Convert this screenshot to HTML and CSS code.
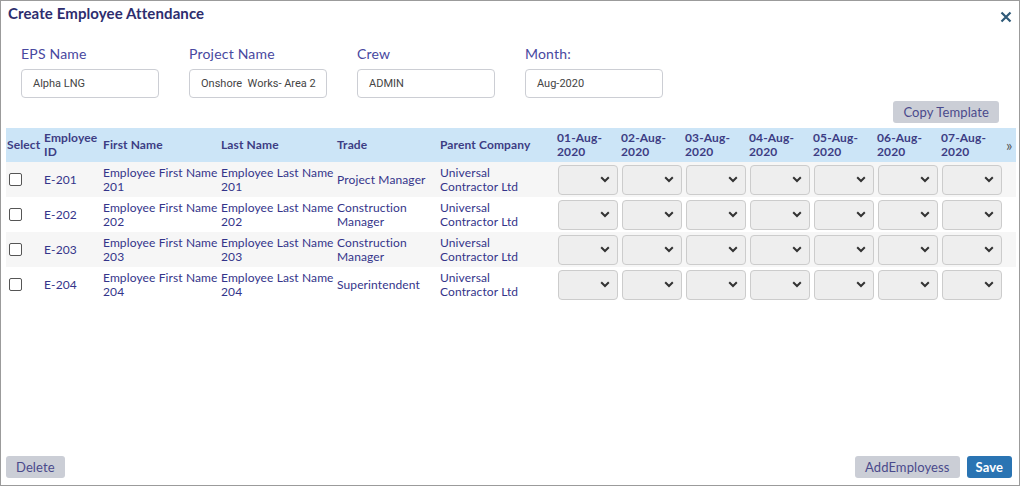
FILE: index.html
```html
<!DOCTYPE html>
<html>
<head>
<meta charset="utf-8">
<link rel="stylesheet" href="styles.css">
</head>
<body>
<div class="dialog">
  <div class="header">
    <div class="title">Create Employee Attendance</div>
    <svg class="close" width="12" height="12" viewBox="0 0 12 12"><path d="M1.5 1.5 L10.5 10.5 M10.5 1.5 L1.5 10.5" stroke="#2f5a78" stroke-width="2.2" stroke-linecap="butt"/></svg>
  </div>
  <div class="fields">
    <div class="field"><label>EPS Name</label><div class="input">Alpha LNG</div></div>
    <div class="field"><label>Project Name</label><div class="input">Onshore &nbsp;Works- Area 2</div></div>
    <div class="field"><label>Crew</label><div class="input">ADMIN</div></div>
    <div class="field"><label>Month:</label><div class="input">Aug-2020</div></div>
  </div>
  <div class="toolbar"><button class="btn">Copy Template</button></div>
  <table class="grid">
    <colgroup>
      <col style="width:36px"><col style="width:59px"><col style="width:118px"><col style="width:116px"><col style="width:103px"><col style="width:117px">
      <col style="width:64px"><col style="width:64px"><col style="width:64px"><col style="width:64px"><col style="width:64px"><col style="width:64px"><col style="width:64px"><col style="width:13px">
    </colgroup>
    <thead>
      <tr>
        <th class="sel">Select</th><th>Employee ID</th><th>First Name</th><th>Last Name</th><th>Trade</th><th>Parent Company</th>
        <th>01-Aug-<br>2020</th><th>02-Aug-<br>2020</th><th>03-Aug-<br>2020</th><th>04-Aug-<br>2020</th><th>05-Aug-<br>2020</th><th>06-Aug-<br>2020</th><th>07-Aug-<br>2020</th><th class="more">»</th>
      </tr>
    </thead>
    <tbody id="rows"></tbody>
  </table>
  <div class="spacer"></div>
  <div class="footer">
    <button class="btn">Delete</button>
    <div class="right"><button class="btn">AddEmployess</button><button class="btn save">Save</button></div>
  </div>
</div>
<script>
var data=[["E-201","Employee First Name 201","Employee Last Name 201","Project Manager"],
["E-202","Employee First Name 202","Employee Last Name 202","Construction Manager"],
["E-203","Employee First Name 203","Employee Last Name 203","Construction Manager"],
["E-204","Employee First Name 204","Employee Last Name 204","Superintendent"]];
var chev='<svg width="10" height="7" viewBox="0 0 10 7"><path d="M1.2 1.3 L5 5 L8.8 1.3" fill="none" stroke="#333" stroke-width="2"/></svg>';
var h="";
data.forEach(function(r){
  h+='<tr><td class="sel"><span class="cb"></span></td><td class="id">'+r[0]+'</td><td>'+r[1]+'</td><td>'+r[2]+'</td><td>'+r[3]+'</td><td class="company">Universal Contractor Ltd</td>';
  for(var i=0;i<7;i++){h+='<td class="dd"><div class="select">'+chev+'</div></td>';}
  h+='<td></td></tr>';
});
document.getElementById('rows').innerHTML=h;
</script>
</body>
</html>
```
FILE: styles.css
```css
* { box-sizing: border-box; }
html, body { margin: 0; padding: 0; }
body { font-family: Lato, "Open Sans", sans-serif; background: #fff; }
.dialog {
  width: 1020px; height: 486px; border: 1px solid #9b9b9b;
  display: flex; flex-direction: column; overflow: hidden;
}
.header { display: flex; justify-content: space-between; align-items: center; padding: 1px 7px 0 7px; height: 22px; }
.title { font-weight: bold; font-size: 15px; color: #2d2d6e; letter-spacing: 0.1px; }
.close { margin-top: 9px; }
.fields { display: flex; gap: 30px; padding: 23px 0 0 20px; }
.field { width: 138px; display: flex; flex-direction: column; }
.field label { font-size: 14px; color: #4848a0; height: 16px; line-height: 16px; letter-spacing: 0.2px; }
.input {
  margin-top: 7px; height: 29px; border: 1px solid #ccced4; border-radius: 4px;
  font-family: Roboto, sans-serif; font-size: 11px; color: #444; padding: 0 11px;
  display: flex; align-items: center; white-space: nowrap; overflow: hidden;
}
.toolbar { display: flex; justify-content: flex-end; padding: 3px 20px 0 0; height: 30px; }
.btn {
  font-family: Lato, sans-serif; font-size: 13px; color: #4a4a8c; background: #cbced6;
  border: none; border-radius: 3px; height: 22px; padding: 0 10px; letter-spacing: 0.1px; white-space: nowrap;
}
.grid { width: 1010px; margin-left: 5px; border-collapse: collapse; table-layout: fixed; font-size: 12px; color: #34348a; letter-spacing: 0.12px; }
.grid th { background: #cce5f7; height: 34px; text-align: left; font-weight: bold; color: #3d3d84; padding: 0 0 0 2px; line-height: 14px; vertical-align: middle; }
.grid th.sel { padding-left: 1px; }
.grid th.more { padding: 0 0 0 3px; font-weight: normal; font-size: 15px; color: #555; }
.grid td { height: 35px; padding: 0 0 0 2px; line-height: 14px; vertical-align: middle; }
.grid td.company { padding-right: 10px; }
.grid tbody tr:nth-child(odd) td { background: #f6f6f6; }
.grid td.sel { padding-left: 3px; }
.cb { display: block; width: 13px; height: 13px; border: 1px solid #555; border-radius: 2px; background: #fff; }
.grid td.dd { padding: 0 1px 0 3px; }
.select {
  width: 60px; height: 30px; background: #eeeeee; border: 1px solid #ccc; border-radius: 4px;
  display: flex; justify-content: flex-end; align-items: center; padding-right: 7px;
}
.spacer { flex: 1; }
.footer { display: flex; justify-content: space-between; padding: 0 7px 7px 5px; }
.footer .right { display: flex; gap: 7px; }
.save { background: #2a74b3; color: #fff; font-weight: bold; padding: 0 9px; }
```
